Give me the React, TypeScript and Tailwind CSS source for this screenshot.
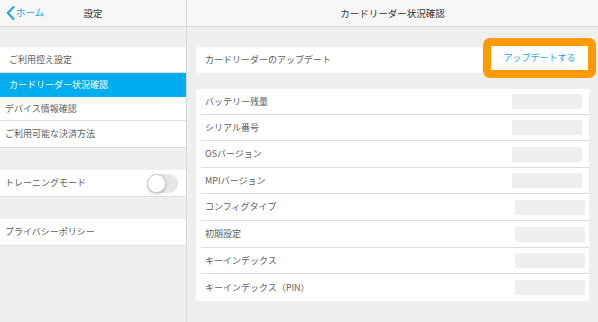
import React from "react";

const font = { fontFamily: '"Noto Sans CJK JP", "Noto Sans", sans-serif' };

function LeftRow({ children, className = "" }: { children: React.ReactNode; className?: string }) {
  return (
    <div className={`flex items-center bg-white border-b border-[#dcdcdc] text-[9px] text-[#606060] ${className}`}>
      {children}
    </div>
  );
}

const infoRows: { label: string; h: string; mr: string }[] = [
  { label: "バッテリー残量", h: "h-[26px]", mr: "mr-[7px]" },
  { label: "シリアル番号", h: "h-[26px]", mr: "mr-[7px]" },
  { label: "OSバージョン", h: "h-[27px]", mr: "mr-[7px]" },
  { label: "MPIバージョン", h: "h-[26px]", mr: "mr-[7px]" },
  { label: "コンフィグタイプ", h: "h-[27px]", mr: "mr-[4px]" },
  { label: "初期設定", h: "h-[27px]", mr: "mr-[4px]" },
  { label: "キーインデックス", h: "h-[26px]", mr: "mr-[4px]" },
  { label: "キーインデックス（PIN）", h: "h-[27px]", mr: "mr-[4px]" },
];

export default function App() {
  return (
    <div className="flex w-[598px] h-[322px] overflow-hidden bg-[#efefef]" style={font}>
      {/* Left panel */}
      <div className="w-[187px] shrink-0 flex flex-col border-r border-[#d6d6d6] bg-[#efefef]">
        <div className="h-[27px] shrink-0 relative flex items-center bg-[#f7f7f7] border-b border-[#d6d6d6]">
          <div className="flex items-center pl-[6px] text-[#1aa3e8]">
            <svg width="9" height="14" viewBox="0 0 9 14" className="mr-[1px]">
              <path d="M7.5 1 L1.8 7 L7.5 13" fill="none" stroke="#1aa3e8" strokeWidth="2" strokeLinecap="round" strokeLinejoin="round" />
            </svg>
            <span className="text-[9.5px] leading-none">ホーム</span>
          </div>
          <div className="absolute left-0 right-0 text-center text-[9.5px] text-[#333] pointer-events-none">設定</div>
        </div>
        <div className="h-[20px] shrink-0" />
        <LeftRow className="h-[26px] pl-[9px]">ご利用控え設定</LeftRow>
        <div className="h-[24px] flex items-center bg-[#00aeef] pl-[9px] text-[9px] text-white">カードリーダー状況確認</div>
        <LeftRow className="h-[24px] pl-[5px]">デバイス情報確認</LeftRow>
        <LeftRow className="h-[27px] pl-[5px]">ご利用可能な決済方法</LeftRow>
        <div className="h-[22px] shrink-0" />
        <LeftRow className="h-[27px] pl-[5px] justify-between pr-[8px]">
          <span>トレーニングモード</span>
          <div className="w-[31px] h-[19px] rounded-full bg-[#e6e6e6] relative">
            <div className="absolute left-0 top-0 w-[19px] h-[19px] rounded-full bg-white border border-[#d0d0d0] shadow-[0_1px_2px_rgba(0,0,0,0.25)]" />
          </div>
        </LeftRow>
        <div className="h-[22px] shrink-0" />
        <LeftRow className="h-[27px] pl-[5px]">プライバシーポリシー</LeftRow>
        <div className="flex-1" />
      </div>

      {/* Right panel */}
      <div className="flex-1 flex flex-col">
        <div className="h-[27px] shrink-0 flex items-center justify-center bg-[#f7f7f7] border-b border-[#d6d6d6] text-[9.5px] text-[#333]">
          カードリーダー状況確認
        </div>
        <div className="pl-[9px] pr-[9px] pt-[20px]">
          <div className="relative h-[26px] bg-white rounded-[3px] flex items-center pl-[9px] text-[9px] text-[#606060]">
            カードリーダーのアップデート
            <div className="absolute left-[287px] top-[-9px] w-[113px] h-[40px] rounded-[7px] border-[8px] border-[#ff9a00] bg-white flex items-center justify-center text-[9px] text-[#1aa8e6]">
              アップデートする
            </div>
          </div>
          <div className="mt-[16px] bg-white rounded-[3px] flex flex-col">
            {infoRows.map((r, i) => (
              <div
                key={r.label}
                className={`${r.h} ml-[5px] flex items-center justify-between pl-[4px] text-[9px] text-[#606060] ${i < infoRows.length - 1 ? "border-b border-[#dcdcdc]" : ""}`}
              >
                <span>{r.label}</span>
                <div className={`w-[70px] h-[15px] bg-[#efefef] ${r.mr}`} />
              </div>
            ))}
          </div>
        </div>
      </div>
    </div>
  );
}
